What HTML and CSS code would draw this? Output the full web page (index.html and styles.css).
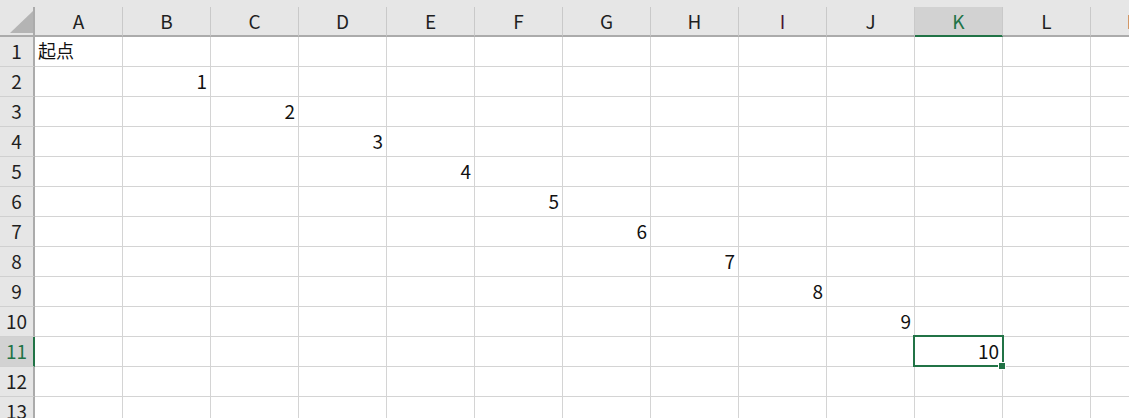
FILE: index.html
```html
<!DOCTYPE html>
<html lang="ja">
<head>
<meta charset="utf-8">
<title>Sheet</title>
<link rel="stylesheet" href="styles.css">
</head>
<body>
<div class="top-strip"></div>
<div class="sheet">
  <div class="hdr corner"><div class="tri"></div></div>
  <div class="hdr col">A</div><div class="hdr col">B</div><div class="hdr col">C</div><div class="hdr col">D</div><div class="hdr col">E</div><div class="hdr col">F</div><div class="hdr col">G</div><div class="hdr col">H</div><div class="hdr col tint">I</div><div class="hdr col">J</div><div class="hdr col sel">K</div><div class="hdr col">L</div><div class="hdr col tint">M</div>

  <div class="hdr row">1</div><div class="cell left"><span class="cjk">起点</span></div><div class="cell"></div><div class="cell"></div><div class="cell"></div><div class="cell"></div><div class="cell"></div><div class="cell"></div><div class="cell"></div><div class="cell"></div><div class="cell"></div><div class="cell"></div><div class="cell"></div><div class="cell"></div>

  <div class="hdr row">2</div><div class="cell"></div><div class="cell">1</div><div class="cell"></div><div class="cell"></div><div class="cell"></div><div class="cell"></div><div class="cell"></div><div class="cell"></div><div class="cell"></div><div class="cell"></div><div class="cell"></div><div class="cell"></div><div class="cell"></div>

  <div class="hdr row">3</div><div class="cell"></div><div class="cell"></div><div class="cell">2</div><div class="cell"></div><div class="cell"></div><div class="cell"></div><div class="cell"></div><div class="cell"></div><div class="cell"></div><div class="cell"></div><div class="cell"></div><div class="cell"></div><div class="cell"></div>

  <div class="hdr row">4</div><div class="cell"></div><div class="cell"></div><div class="cell"></div><div class="cell">3</div><div class="cell"></div><div class="cell"></div><div class="cell"></div><div class="cell"></div><div class="cell"></div><div class="cell"></div><div class="cell"></div><div class="cell"></div><div class="cell"></div>

  <div class="hdr row">5</div><div class="cell"></div><div class="cell"></div><div class="cell"></div><div class="cell"></div><div class="cell">4</div><div class="cell"></div><div class="cell"></div><div class="cell"></div><div class="cell"></div><div class="cell"></div><div class="cell"></div><div class="cell"></div><div class="cell"></div>

  <div class="hdr row">6</div><div class="cell"></div><div class="cell"></div><div class="cell"></div><div class="cell"></div><div class="cell"></div><div class="cell">5</div><div class="cell"></div><div class="cell"></div><div class="cell"></div><div class="cell"></div><div class="cell"></div><div class="cell"></div><div class="cell"></div>

  <div class="hdr row">7</div><div class="cell"></div><div class="cell"></div><div class="cell"></div><div class="cell"></div><div class="cell"></div><div class="cell"></div><div class="cell">6</div><div class="cell"></div><div class="cell"></div><div class="cell"></div><div class="cell"></div><div class="cell"></div><div class="cell"></div>

  <div class="hdr row">8</div><div class="cell"></div><div class="cell"></div><div class="cell"></div><div class="cell"></div><div class="cell"></div><div class="cell"></div><div class="cell"></div><div class="cell">7</div><div class="cell"></div><div class="cell"></div><div class="cell"></div><div class="cell"></div><div class="cell"></div>

  <div class="hdr row">9</div><div class="cell"></div><div class="cell"></div><div class="cell"></div><div class="cell"></div><div class="cell"></div><div class="cell"></div><div class="cell"></div><div class="cell"></div><div class="cell">8</div><div class="cell"></div><div class="cell"></div><div class="cell"></div><div class="cell"></div>

  <div class="hdr row">10</div><div class="cell"></div><div class="cell"></div><div class="cell"></div><div class="cell"></div><div class="cell"></div><div class="cell"></div><div class="cell"></div><div class="cell"></div><div class="cell"></div><div class="cell">9</div><div class="cell"></div><div class="cell"></div><div class="cell"></div>

  <div class="hdr row sel">11</div><div class="cell"></div><div class="cell"></div><div class="cell"></div><div class="cell"></div><div class="cell"></div><div class="cell"></div><div class="cell"></div><div class="cell"></div><div class="cell"></div><div class="cell"></div><div class="cell active">10<div class="selbox"><div class="handle"></div></div></div><div class="cell"></div><div class="cell"></div>

  <div class="hdr row">12</div><div class="cell"></div><div class="cell"></div><div class="cell"></div><div class="cell"></div><div class="cell"></div><div class="cell"></div><div class="cell"></div><div class="cell"></div><div class="cell"></div><div class="cell"></div><div class="cell"></div><div class="cell"></div><div class="cell"></div>

  <div class="hdr row">13</div><div class="cell"></div><div class="cell"></div><div class="cell"></div><div class="cell"></div><div class="cell"></div><div class="cell"></div><div class="cell"></div><div class="cell"></div><div class="cell"></div><div class="cell"></div><div class="cell"></div><div class="cell"></div><div class="cell"></div>
</div>
</body>
</html>
```

FILE: styles.css
```css
html, body {
  margin: 0;
  padding: 0;
  background: #ffffff;
  overflow: hidden;
  width: 1129px;
  height: 418px;
}

body {
  font-family: "Noto Sans CJK JP", "Noto Sans", sans-serif;
  font-size: 19px;
  color: #1f1f1f;
}

.top-strip {
  height: 7px;
  background: #e6e6e6;
}

.sheet {
  display: grid;
  grid-template-columns: 35px repeat(13, 88px);
  grid-auto-rows: 30px;
  width: 1179px;
}

.hdr {
  background: #e6e6e6;
  box-sizing: border-box;
  display: flex;
  align-items: center;
  justify-content: center;
  color: #1f1f1f;
  padding-bottom: 2px;
}

.corner {
  border-right: 2px solid #ababab;
  border-bottom: 2px solid #ababab;
  justify-content: flex-end;
  align-items: flex-end;
  padding: 0 0 2px 0;
}

.tri {
  width: 23px;
  height: 22px;
  background: #b4b4b4;
  clip-path: polygon(100% 0, 100% 100%, 0 100%);
}

.col {
  border-right: 1px solid #c9c9c9;
  border-bottom: 2px solid #ababab;
}

.col.tint {
  color: #4d1434;
}

.col.sel {
  background: #d2d2d2;
  border-bottom-color: #217346;
  color: #217346;
}

.row {
  border-right: 2px solid #ababab;
  border-bottom: 1px solid #d0d0d0;
}

.row.sel {
  background: #d2d2d2;
  border-right-color: #217346;
  color: #217346;
}

.cell {
  box-sizing: border-box;
  border-right: 1px solid #d4d4d4;
  border-bottom: 1px solid #d4d4d4;
  display: flex;
  align-items: center;
  justify-content: flex-end;
  padding: 0 3px 3px 3px;
  color: #111111;
}

.cell.left {
  justify-content: flex-start;
}

.cjk {
  font-size: 18px;
}

.active {
  position: relative;
}

.selbox {
  position: absolute;
  left: -2px;
  top: -2px;
  width: 91px;
  height: 32px;
  box-sizing: border-box;
  border: 2px solid #217346;
}

.handle {
  position: absolute;
  right: -4px;
  bottom: -5px;
  width: 6px;
  height: 6px;
  background: #217346;
  border: 1px solid #ffffff;
}
```
